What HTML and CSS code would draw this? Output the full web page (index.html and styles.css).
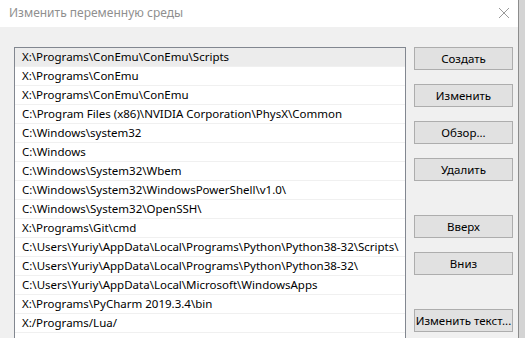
FILE: index.html
```html
<!DOCTYPE html>
<html lang="ru">
<head>
    <meta charset="UTF-8">
    <meta name="viewport" content="width=device-width, initial-scale=1.0">
    <title>Изменить переменную среды</title>
    <link rel="stylesheet" href="styles.css">
</head>
<body>
  <div class="screen">
    <div class="dialog">
        <div class="titlebar">
            <span class="title">Изменить переменную среды</span>
            <svg class="close" width="12" height="12" viewBox="0 0 12 12">
                <path d="M1 1 L11 11 M11 1 L1 11" stroke="#9a9a9a" stroke-width="1" fill="none"/>
            </svg>
        </div>
        <div class="body">
            <div class="list">
                <div class="row selected">X:\Programs\ConEmu\ConEmu\Scripts</div>
                <div class="row">X:\Programs\ConEmu</div>
                <div class="row">X:\Programs\ConEmu\ConEmu</div>
                <div class="row">C:\Program Files (x86)\NVIDIA Corporation\PhysX\Common</div>
                <div class="row">C:\Windows\system32</div>
                <div class="row">C:\Windows</div>
                <div class="row">C:\Windows\System32\Wbem</div>
                <div class="row">C:\Windows\System32\WindowsPowerShell\v1.0\</div>
                <div class="row">C:\Windows\System32\OpenSSH\</div>
                <div class="row">X:\Programs\Git\cmd</div>
                <div class="row">C:\Users\Yuriy\AppData\Local\Programs\Python\Python38-32\Scripts\</div>
                <div class="row">C:\Users\Yuriy\AppData\Local\Programs\Python\Python38-32\</div>
                <div class="row">C:\Users\Yuriy\AppData\Local\Microsoft\WindowsApps</div>
                <div class="row">X:\Programs\PyCharm 2019.3.4\bin</div>
                <div class="row">X:/Programs/Lua/</div>
                <div class="row"></div>
            </div>
            <div class="buttons">
                <button>Создать</button>
                <button>Изменить</button>
                <button>Обзор...</button>
                <button>Удалить</button>
                <button class="spaced">Вверх</button>
                <button>Вниз</button>
                <button class="spaced">Изменить текст...</button>
            </div>
        </div>
    </div>
    <div class="behind"></div>
  </div>
</body>
</html>
```
FILE: styles.css
```css
body {
    margin: 0;
    padding: 0;
    font-family: "Noto Sans", Arial, sans-serif;
    font-size: 11.5px;
    background-color: #f0f0f0;
    overflow: hidden;
}
.screen {
    display: flex;
    height: 338px;
}
.dialog {
    width: 518px;
    border-right: 1px solid #8c8c8c;
    background-color: #f0f0f0;
}
.behind {
    flex: 1;
    background-color: #d4d4d4;
}
.titlebar {
    height: 27px;
    background-color: #fff;
    display: flex;
    align-items: center;
    justify-content: space-between;
    padding: 0 8px 0 9px;
}
.title {
    color: #8f8f8f;
    font-size: 12px;
    padding-bottom: 3px;
}
.close {
    margin-bottom: 2px;
}
.body {
    display: flex;
    padding: 20px 0 0 14px;
    gap: 8px;
}
.list {
    width: 390px;
    height: 300px;
    border: 1px solid #828790;
    border-bottom: none;
    background-color: #fff;
}
.row {
    height: 18px;
    line-height: 18px;
    border-bottom: 1px solid #f0f0f0;
    padding-left: 7px;
    color: #000;
    white-space: nowrap;
}
.row.selected {
    background-color: #ececec;
}
.buttons {
    display: flex;
    flex-direction: column;
    gap: 14px;
}
button {
    width: 99px;
    height: 23px;
    padding: 0;
    margin: 0;
    border: 1px solid #adadad;
    background-color: #e1e1e1;
    font-family: "Noto Sans", Arial, sans-serif;
    font-size: 11.5px;
    color: #000;
    white-space: nowrap;
}
button.spaced {
    margin-top: 20px;
}
```
